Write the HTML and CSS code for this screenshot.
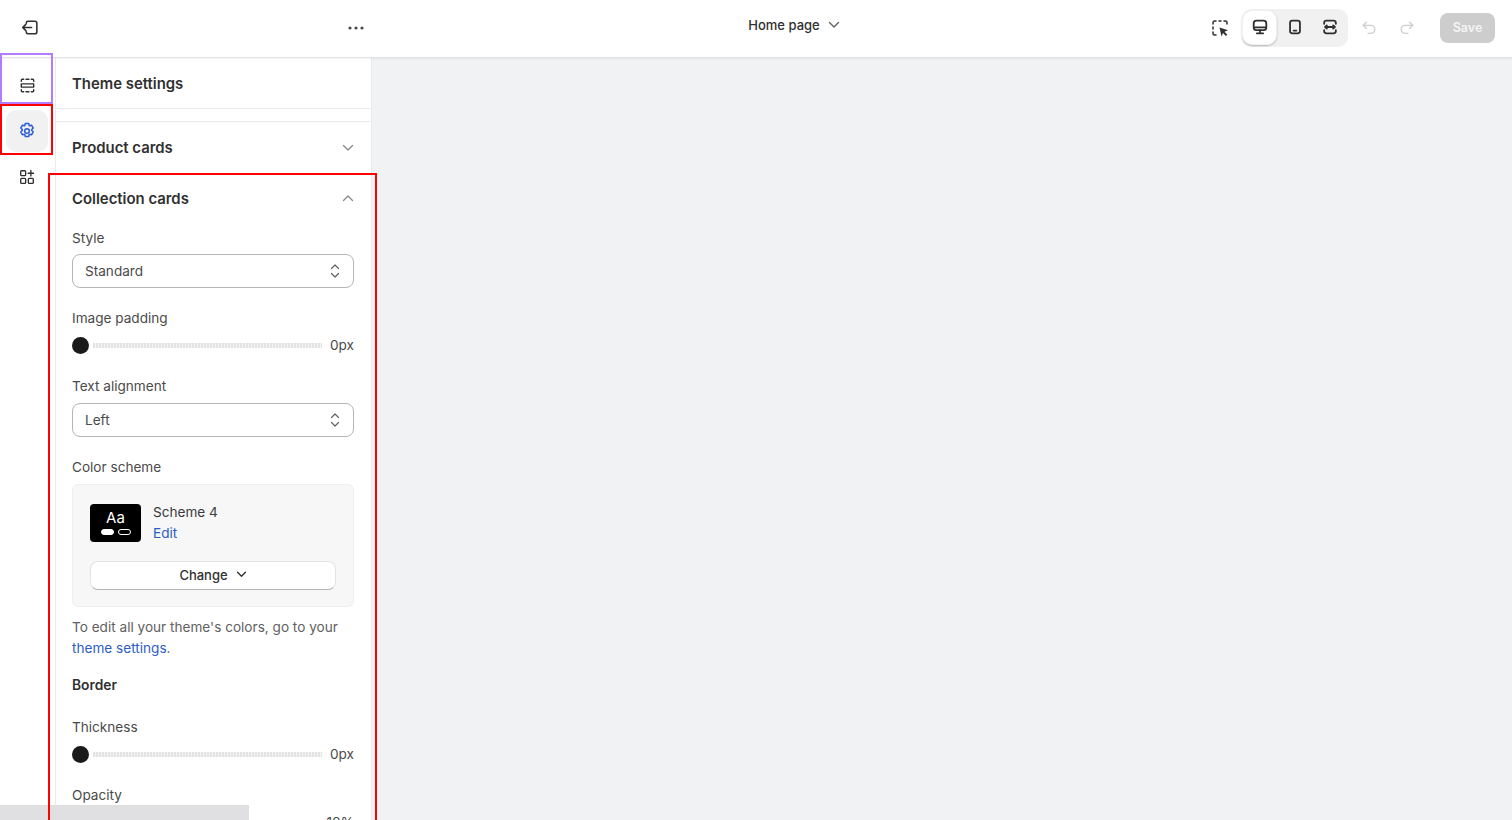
FILE: index.html
```html
<!DOCTYPE html>
<html lang="en">
<head>
<meta charset="utf-8">
<title>Theme settings</title>
<link rel="stylesheet" href="styles.css">
</head>
<body>
<div class="app">
  <header class="topbar">
    <div class="top-left">
      <svg class="ic exit" viewBox="0 0 20 20"><path d="M7 6V5.500A1.500 1.500 0 0 1 8.500 4H15a2 2 0 0 1 2 2v8a2 2 0 0 1-2 2H8.500A1.500 1.500 0 0 1 7 14.500V14M12 10H3.500M6.500 7 3.500 10l3 3"/></svg>
      <svg class="dots" viewBox="0 0 16 4"><circle cx="2" cy="2" r="1.600"/><circle cx="8" cy="2" r="1.600"/><circle cx="14" cy="2" r="1.600"/></svg>
    </div>
    <div class="top-center">
      <span>Home page</span>
      <svg class="chev-sm" viewBox="0 0 12 8"><path d="M1.500 1.500 6 6l4.500-4.500"/></svg>
    </div>
    <div class="top-right">
      <svg class="ic inspect" viewBox="0 0 20 20"><path d="M3 6V4.500A1.500 1.500 0 0 1 4.500 3H6M9 3h2M14 3h1.500A1.500 1.500 0 0 1 17 4.500V6M3 9v2M3 14v1.500A1.500 1.500 0 0 0 4.500 17H6"/><path class="solid" d="m9.500 9.500 8.500 2.800-3.500 1.500 2.800 3-1.400 1.300-2.900-3-1.500 3.500z"/></svg>
      <div class="view-group">
        <button class="view-btn active"><svg class="ic thick" viewBox="0 0 20 20"><rect x="3" y="3" width="14" height="10.500" rx="3"/><path d="M3.500 10.500h13M10 13.500V17M6.500 17h7"/></svg></button>
        <button class="view-btn"><svg class="ic thick" viewBox="0 0 20 20"><rect x="4.500" y="3" width="11" height="14" rx="2.500"/><path d="M8.500 14h3"/></svg></button>
        <button class="view-btn"><svg class="ic thick" viewBox="0 0 20 20"><path d="M3.500 6.500V5.500a2.500 2.500 0 0 1 2.500-2.500h8a2.500 2.500 0 0 1 2.500 2.500v1M3.500 13.500v1A2.500 2.500 0 0 0 6 17h8a2.500 2.500 0 0 0 2.500-2.500v-1M5 10h10M6.500 8.200 4.500 10l2 1.800M13.500 8.200l2 1.800-2 1.800"/></svg></button>
      </div>
      <svg class="ic hist undo" viewBox="0 0 20 20"><path d="M7 3.500 3.500 7 7 10.500M3.500 7H12a4.500 4.500 0 0 1 0 9H9"/></svg>
      <svg class="ic hist redo" viewBox="0 0 20 20"><path d="M13 3.500 16.500 7 13 10.500M16.500 7H8a4.500 4.500 0 0 0 0 9h3"/></svg>
      <button class="save">Save</button>
    </div>
  </header>
  <div class="body-row">
    <nav class="rail">
      <div class="rail-item">
        <svg class="ic small" viewBox="0 0 20 20"><path d="M3.500 8.300h13v3.400h-13zM3.500 5.500V4.500a1 1 0 0 1 1-1H6M8.500 3.500h3M14 3.500h1.500a1 1 0 0 1 1 1v1M3.500 14.500v1a1 1 0 0 0 1 1H6M8.500 16.500h3M14 16.500h1.500a1 1 0 0 0 1-1v-1"/></svg>
      </div>
      <div class="rail-item selected">
        <svg class="ic gear" viewBox="0 0 20 20"><circle cx="10" cy="10" r="2.300"/><path d="M8.300 2.500h3.400l.6 2.300 2.200-.6 1.700 2.800-1.600 1.700 0 .6 1.600 1.700-1.700 2.800-2.200-.6-.6 2.300H8.300l-.6-2.300-2.200.6-1.700-2.800 1.600-1.700 0-.6-1.600-1.700 1.700-2.800 2.200.6z"/></svg>
      </div>
      <div class="rail-item">
        <svg class="ic smaller" viewBox="0 0 20 20"><rect x="3" y="3" width="5.500" height="5.500" rx="1"/><rect x="3" y="11.500" width="5.500" height="5.500" rx="1"/><rect x="11.500" y="11.500" width="5.500" height="5.500" rx="1"/><path d="M14.300 2.800v6M11.300 5.800h6"/></svg>
      </div>
    </nav>
    <aside class="panel">
      <div class="panel-title">Theme settings</div>
      <div class="panel-gap"></div>
      <div class="acc-row product">
        <span>Product cards</span>
        <svg class="chev" viewBox="0 0 12 8"><path d="M1.500 1.500 6 6l4.500-4.500"/></svg>
      </div>
      <section class="acc-body">
        <div class="acc-row collection">
          <span>Collection cards</span>
          <svg class="chev up" viewBox="0 0 12 8"><path d="M1.500 6.500 6 2l4.500 4.500"/></svg>
        </div>
        <label class="label l-style">Style</label>
        <div class="select">
          <span>Standard</span>
          <svg class="updown" viewBox="0 0 10 16"><path d="M1.500 5.500 5 2l3.500 3.500M1.500 10.500 5 14l3.500-3.500"/></svg>
        </div>
        <label class="label l-padding">Image padding</label>
        <div class="slider">
          <span class="knob"></span><span class="track"></span><span class="val">0px</span>
        </div>
        <label class="label l-align">Text alignment</label>
        <div class="select">
          <span>Left</span>
          <svg class="updown" viewBox="0 0 10 16"><path d="M1.500 5.500 5 2l3.500 3.500M1.500 10.500 5 14l3.500-3.500"/></svg>
        </div>
        <label class="label l-scheme">Color scheme</label>
        <div class="scheme">
          <div class="scheme-top">
            <div class="swatch">
              <span class="aa">Aa</span>
              <span class="pills"><i class="pill fill"></i><i class="pill"></i></span>
            </div>
            <div class="scheme-info">
              <span class="scheme-name">Scheme 4</span>
              <a class="link">Edit</a>
            </div>
          </div>
          <button class="change">Change <svg class="chev-change" viewBox="0 0 12 8"><path d="M1.500 1.500 6 6l4.500-4.500"/></svg></button>
        </div>
        <p class="help">To edit all your theme's colors, go to your <a class="link">theme settings</a>.</p>
        <h3 class="sub">Border</h3>
        <label class="label l-thick">Thickness</label>
        <div class="slider">
          <span class="knob"></span><span class="track"></span><span class="val">0px</span>
        </div>
        <label class="label l-opacity">Opacity</label>
        <div class="slider last">
          <span class="knob"></span><span class="track"></span><span class="val">10%</span>
        </div>
      </section>
    </aside>
    <main class="preview"></main>
  </div>
</div>
<div class="mark purple"></div>
<div class="mark red-a"></div>
<div class="mark red-b"></div>
<div class="hscroll"></div>
</body>
</html>
```
FILE: styles.css
```css
* { box-sizing: border-box; }
html, body { margin: 0; height: 100%; overflow: hidden; }
body { font-family: Inter, "Liberation Sans", sans-serif; font-size: 13.6px; color: #303030; background: #fff; }
.app { display: flex; flex-direction: column; height: 820px; }
svg { display: block; flex: none; fill: none; }
.ic { width: 20px; height: 20px; stroke: #303030; stroke-width: 1.5; stroke-linecap: round; stroke-linejoin: round; }
.thick { stroke-width: 2; }
.small { width: 19px; height: 19px; }
.smaller { width: 18px; height: 18px; }

.topbar { height: 58px; flex: none; display: grid; grid-template-columns: 1fr auto 1fr; align-items: center; padding-bottom: 2px; border-bottom: 1px solid #e3e3e3; box-shadow: 0 1px 2px rgba(0,0,0,.06); position: relative; z-index: 2; background: #fff; }
.top-left { display: flex; align-items: center; padding-left: 19px; width: 371px; justify-content: space-between; padding-right: 7px; }
.exit { width: 21px; height: 21px; }
.dots { width: 16px; height: 4px; fill: #4a4a4a; }
.top-center { display: flex; align-items: center; gap: 8px; font-weight: 500; font-size: 13px; margin-top: -6px; margin-left: 76px; }
.chev-sm { width: 12px; height: 8px; stroke: #616161; stroke-width: 1.4; stroke-linecap: round; stroke-linejoin: round; }
.top-right { display: flex; align-items: center; justify-content: flex-end; padding-right: 17px; }
.inspect { margin-right: 12px; }
.inspect .solid { fill: #303030; stroke: none; }
.view-group { display: flex; align-items: flex-start; height: 38px; width: 106px; background: #f1f1f1; border-radius: 10px; margin-right: 12px; padding-top: 1px; }
.view-btn { width: 35px; height: 35px; border: 0; background: none; padding: 0; display: flex; align-items: center; justify-content: center; border-radius: 10px; }
.view-btn svg { width: 18px; height: 18px; }
.view-btn.active { background: #fff; box-shadow: 0 1px 2px rgba(0,0,0,.25), 0 0 0 1px rgba(0,0,0,.05) inset; }
.hist { stroke: #cfcfcf; margin-right: 20px; width: 18px; height: 18px; }
.redo { margin-right: 24px; }
.save { width: 55px; height: 30px; border: 0; border-radius: 8px; background: #cdcdcd; color: #f4f4f4; font: 600 12.5px Inter, sans-serif; padding: 0; }

.body-row { flex: 1; display: flex; min-height: 0; }
.rail { width: 55px; flex: none; display: flex; flex-direction: column; align-items: flex-start; padding-left: 6px; background: #fff; }
.rail-item { width: 42px; height: 42px; display: flex; align-items: center; justify-content: center; border-radius: 10px; margin-top: 4px; flex: none; }
.rail-item:first-child { margin-top: 6px; }
.selected { background: #f1f1f1; }
.gear { stroke: #2c5cd6; }

.panel { width: 317px; flex: none; border-left: 1px solid #ebebeb; border-right: 1px solid #ebebeb; background: #fff; overflow: hidden; }
.panel-title { height: 51px; padding: 2px 0 0 16px; display: flex; align-items: center; font-size: 14.9px; font-weight: 600; border-bottom: 1px solid #ebebeb; }
.panel-gap { height: 13px; border-bottom: 1px solid #ebebeb; }
.acc-row { display: flex; justify-content: space-between; align-items: center; font-size: 14.9px; font-weight: 600; padding: 0 16px; }
.product { height: 52px; }
.collection { height: 50px; }
.chev { width: 12px; height: 8px; stroke: #8a8a8a; stroke-width: 1.4; stroke-linecap: round; stroke-linejoin: round; margin-right: 1px; }
.chev.up { margin-bottom: 2px; }
.acc-body { padding: 0 17px 0 16px; }
.acc-body .acc-row { margin: 0 -17px 0 -16px; }

.label { display: block; line-height: 20px; color: #4a4a4a; }
.l-style { margin-top: 4px; margin-bottom: 6px; }
.l-padding { margin-top: 20px; margin-bottom: 7px; }
.l-align { margin-top: 21px; margin-bottom: 7px; }
.l-scheme { margin-top: 20px; margin-bottom: 7px; }
.l-thick { margin-top: 22px; margin-bottom: 7px; }
.l-opacity { margin-top: 21px; margin-bottom: 7px; }

.select { height: 34px; border: 1px solid #b5b5b5; border-radius: 8px; display: flex; align-items: center; justify-content: space-between; padding: 0 13px 0 12px; color: #4a4a4a; }
.updown { width: 10px; height: 16px; stroke: #616161; stroke-width: 1.2; stroke-linecap: round; stroke-linejoin: round; }

.slider { display: flex; align-items: center; height: 20px; }
.knob { width: 17px; height: 17px; border-radius: 50%; background: #1a1a1a; flex: none; }
.track { flex: 1; height: 5px; margin: 0 8px 0 4px; background: repeating-linear-gradient(90deg, #e3e3e3 0 2px, #f4f4f4 2px 3px); }
.val { color: #4a4a4a; min-width: 24px; text-align: right; white-space: nowrap; }

.scheme { height: 123px; background: #f7f7f7; border: 1px solid #efefef; border-radius: 6px; padding: 15px 17px 0 17px; }
.scheme-top { display: flex; align-items: flex-start; gap: 12px; }
.swatch { width: 51px; height: 38px; margin-top: 4px; background: #000; border-radius: 4px; color: #fff; display: flex; flex-direction: column; align-items: center; padding-top: 5px; }
.aa { font-size: 15px; line-height: 18px; }
.pills { display: flex; gap: 4px; margin-top: 2px; }
.pill { width: 13px; height: 6px; border-radius: 3px; border: 1px solid #fff; display: block; }
.pill.fill { background: #fff; }
.scheme-info { display: flex; flex-direction: column; line-height: 21px; margin-top: 2px; }
.scheme-name { color: #3a3a3a; }
.link { color: #2c5cc5; }
.change { display: flex; align-items: center; justify-content: center; gap: 8px; width: 246px; height: 29px; margin-top: 17px; background: #fff; border: 1px solid #e3e3e3; border-bottom-color: #b5b5b5; border-radius: 8px; font: 500 13px Inter, sans-serif; color: #303030; padding: 0 0 2px; }
.chev-change { width: 11px; height: 7px; stroke: #303030; stroke-width: 1.6; stroke-linecap: round; stroke-linejoin: round; }
.help { margin: 10px 0 0; line-height: 21px; color: #616161; }
.sub { margin: 16px 0 0; font-size: 13.8px; line-height: 20px; font-weight: 600; color: #303030; }

.preview { flex: 1; background: #f1f2f4; }

.mark { position: absolute; border-style: solid; border-width: 2px; pointer-events: none; z-index: 5; }
.purple { left: 0; top: 53px; width: 53px; height: 51px; border-color: #b57bff; }
.red-a { left: 0; top: 104px; width: 53px; height: 51px; border-color: #ff0000; }
.red-b { left: 48px; top: 173px; width: 329px; height: 660px; border-color: #ff0000; }
.hscroll { position: absolute; left: 0; bottom: 0; width: 249px; height: 15px; background: #e0e0e2; z-index: 4; }
```
